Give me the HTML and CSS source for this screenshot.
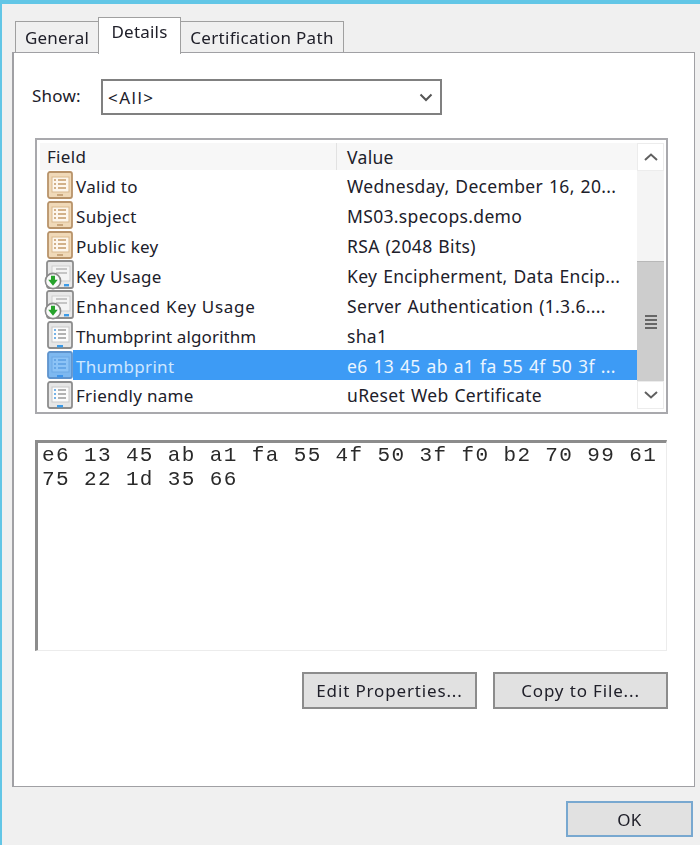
FILE: index.html
```html
<!DOCTYPE html>
<html lang="en">
<head>
<meta charset="utf-8">
<title>Certificate</title>
<link rel="stylesheet" href="styles.css">
</head>
<body>
<svg class="defs" width="0" height="0" aria-hidden="true">
  <symbol id="ico-orange" viewBox="0 0 26 28">
    <rect x="1" y="1" width="24" height="26" rx="2" fill="#f0d9b8" stroke="#b8936a" stroke-width="1.8"/>
    <rect x="5" y="6" width="17" height="15" fill="#fdf6ec" stroke="#d9b98e"/>
    <path d="M7 9h2M11 9h8M7 13h2M11 13h8M7 17h2M11 17h8" stroke="#c49a68" stroke-width="1.4"/>
    <rect x="10" y="23" width="6" height="2" fill="#c9a67c"/>
  </symbol>
  <symbol id="ico-gray" viewBox="0 0 26 28">
    <rect x="1" y="1" width="24" height="26" rx="2" fill="#e6e6e6" stroke="#8d8d8d" stroke-width="1.8"/>
    <rect x="5" y="6" width="17" height="15" fill="#fbfbfb" stroke="#c8c8c8"/>
    <path d="M7 9h2M7 13h2M7 17h2" stroke="#4a9be0" stroke-width="1.4"/>
    <path d="M11 9h8M11 13h8M11 17h8" stroke="#9a9a9a" stroke-width="1.4"/>
    <rect x="10" y="24" width="6" height="2.400" fill="#3c9be8"/>
  </symbol>
  <symbol id="ico-selected" viewBox="0 0 26 28">
    <rect x="1" y="1" width="24" height="26" rx="2" fill="#7db8f0" stroke="#5f93cc" stroke-width="1.8"/>
    <rect x="5" y="6" width="17" height="15" fill="#8cc3f6" stroke="#6ca8e4"/>
    <path d="M7 9h2M11 9h8M7 13h2M11 13h8M7 17h2M11 17h8" stroke="#5a9ee2" stroke-width="1.4"/>
    <rect x="10" y="24" width="6" height="2.400" fill="#3c93ea"/>
  </symbol>
  <symbol id="ico-usage" viewBox="0 0 30 30">
    <rect x="3" y="1" width="26" height="27" rx="2" fill="#e8e8e8" stroke="#8d8d8d" stroke-width="1.8"/>
    <rect x="8" y="6" width="18" height="15" fill="#f4f4f4" stroke="#cdcdcd"/>
    <path d="M12 9h11M12 13h11" stroke="#b5b5b5" stroke-width="1.4"/>
    <rect x="20" y="24" width="5" height="2.400" fill="#3c9be8"/>
    <circle cx="9" cy="21" r="7.600" fill="#fafafa" stroke="#8a8a8a" stroke-width="1.6"/>
    <path d="M7 15.800h4v4h2.800L9 25.800l-4.800-6H7z" fill="#27a32c"/>
  </symbol>
</svg>

<div class="window">
  <div class="content">
    <div class="tabs">
      <div class="tab tab-general">General</div>
      <div class="tab tab-active">Details</div>
      <div class="tab tab-path">Certification Path</div>
    </div>

    <div class="panel">
      <div class="show-row">
        <span class="show-label">Show:</span>
        <div class="select">
          <span class="select-value">&lt;All&gt;</span>
          <svg class="chevron" width="14" height="9" viewBox="0 0 14 9"><path d="M1.500 1.500 7 7l5.500-5.500" fill="none" stroke="#555" stroke-width="2"/></svg>
        </div>
      </div>

      <div class="list">
        <div class="list-main">
          <div class="list-head">
            <div class="col-field head-field">Field</div>
            <div class="col-value">Value</div>
          </div>
          <div class="row">
            <div class="col-field"><svg class="ico"><use href="#ico-orange"/></svg><span>Valid to</span></div>
            <div class="col-value">Wednesday, December 16, 20...</div>
          </div>
          <div class="row">
            <div class="col-field"><svg class="ico"><use href="#ico-orange"/></svg><span>Subject</span></div>
            <div class="col-value">MS03.specops.demo</div>
          </div>
          <div class="row">
            <div class="col-field"><svg class="ico"><use href="#ico-orange"/></svg><span>Public key</span></div>
            <div class="col-value">RSA (2048 Bits)</div>
          </div>
          <div class="row">
            <div class="col-field"><svg class="ico ico-wide"><use href="#ico-usage"/></svg><span>Key Usage</span></div>
            <div class="col-value">Key Encipherment, Data Encip...</div>
          </div>
          <div class="row">
            <div class="col-field"><svg class="ico ico-wide"><use href="#ico-usage"/></svg><span class="wide-label">Enhanced Key Usage</span></div>
            <div class="col-value">Server Authentication (1.3.6....</div>
          </div>
          <div class="row">
            <div class="col-field"><svg class="ico"><use href="#ico-gray"/></svg><span class="tight-label">Thumbprint algorithm</span></div>
            <div class="col-value">sha1</div>
          </div>
          <div class="row row-selected">
            <div class="col-field"><svg class="ico"><use href="#ico-selected"/></svg><span class="sel-text">Thumbprint</span></div>
            <div class="col-value">e6 13 45 ab a1 fa 55 4f 50 3f ...</div>
          </div>
          <div class="row row-last">
            <div class="col-field"><svg class="ico"><use href="#ico-gray"/></svg><span>Friendly name</span></div>
            <div class="col-value">uReset Web Certificate</div>
          </div>
        </div>
        <div class="scrollbar">
          <div class="sb-btn sb-up"><svg width="16" height="10" viewBox="0 0 16 10"><path d="M2 8 8 2.500 14 8" fill="none" stroke="#606060" stroke-width="2"/></svg></div>
          <div class="sb-track"></div>
          <div class="sb-thumb">
            <span class="grip"></span><span class="grip"></span><span class="grip"></span><span class="grip"></span>
          </div>
          <div class="sb-btn sb-down"><svg width="16" height="10" viewBox="0 0 16 10"><path d="M2 2 8 7.500 14 2" fill="none" stroke="#606060" stroke-width="2"/></svg></div>
        </div>
      </div>

      <div class="detail">
        <div>e6 13 45 ab a1 fa 55 4f 50 3f f0 b2 70 99 61</div>
        <div>75 22 1d 35 66</div>
      </div>

      <div class="actions">
        <div class="btn">Edit Properties...</div>
        <div class="btn">Copy to File...</div>
      </div>
    </div>

    <div class="footer">
      <div class="btn btn-ok">OK</div>
    </div>
  </div>
</div>
</body>
</html>
```

FILE: styles.css
```css
* { box-sizing: border-box; }
html, body { margin: 0; padding: 0; background: #f0f0f0; }
.defs { position: absolute; }

.window {
  width: 700px;
  height: 845px;
  overflow: hidden;
  background: #f0f0f0;
  border-top: 4px solid #62c6e6;
  border-left: 2px solid #62c6e6;
}
.content {
  height: 100%;
  padding-top: 13px;
  font-family: "Noto Sans", sans-serif;
  font-size: 17px;
  letter-spacing: 0.2px;
  color: #20202a;
  filter: blur(0.6px);
}

.tabs {
  display: flex;
  align-items: flex-end;
  margin: 0 0 -2px 13px;
  height: 37px;
  position: relative;
  z-index: 2;
}
.tab {
  height: 31px;
  margin-bottom: 2px;
  border: 1.5px solid #a0a0a0;
  border-bottom: 0;
  background: #f0f0f0;
  padding-top: 3px;
  text-align: center;
  line-height: 25px;
}
.tab-general { width: 83px; border-right: 0; }
.tab-path { width: 163px; border-left: 0; letter-spacing: 0.3px; }
.tab-active {
  width: 83px;
  height: 37px;
  margin-bottom: 0;
  background: #fff;
  padding-top: 1px;
}

.panel {
  width: 683px;
  height: 735px;
  margin-left: 10px;
  background: #fff;
  border: 1.5px solid #a0a0a4;
  border-left-width: 2px;
  padding: 26px 27px 0 21px;
}

.show-row { display: flex; align-items: center; height: 36px; margin-left: -3px; }
.show-label { width: 69px; padding-bottom: 4px; }
.select {
  width: 341px;
  height: 36px;
  border: 2px solid #808080;
  display: flex;
  align-items: center;
  justify-content: space-between;
  padding: 0 7px 0 5px;
  background: #fff;
}
.select-value { letter-spacing: 1.5px; }

.list {
  display: flex;
  width: 633px;
  height: 276px;
  margin-top: 23px;
  border: 2px solid #a9a9ad;
  padding: 3px 2px 3px 3px;
}
.list-main { width: 597px; flex: none; }
.list-head {
  display: flex;
  height: 27px;
  background: #f7f7f7;
  align-items: center;
}
.col-field { width: 297px; flex: none; letter-spacing: 0.3px; }
.head-field { padding-left: 7px; border-right: 1.5px solid #e2e2e2; height: 100%; display: flex; align-items: center; }
.col-value {
  padding-left: 10px;
  white-space: nowrap;
  overflow: hidden;
  flex: 1;
  font-size: 17.5px;
  letter-spacing: 0.33px;
  word-spacing: 1px;
}
.row {
  display: flex;
  height: 30px;
  align-items: center;
}
.row .col-field { display: flex; align-items: center; padding-left: 7px; height: 100%; }
.row span, .row .col-value { position: relative; top: 1px; }
.row-last span, .row-last .col-value { top: 0; }
.wide-label { letter-spacing: 0.75px; }
.tight-label { letter-spacing: 0.1px; }
.ico { width: 26px; height: 28px; flex: none; margin-right: 3px; }
.ico-wide { width: 30px; height: 30px; margin-left: -3px; margin-right: 2px; }

.row-selected { background: linear-gradient(to right, #fff 33px, #3d9bf5 33px); color: #e4f2ff; }
.row-selected .col-value { color: #eaf5ff; }
.sel-text { color: #cfe7ff; }

.scrollbar {
  width: 27px;
  flex: none;
  display: flex;
  flex-direction: column;
  background: #f0f0f0;
}
.sb-btn {
  background: #fff;
  display: flex;
  align-items: center;
  justify-content: center;
  border: 1px solid #ececec;
}
.sb-up { height: 28px; }
.sb-track { height: 90px; background: #f4f4f4; }
.sb-thumb {
  height: 120px;
  background: #cdcdcd;
  border-top: 1px solid #b8b8b8;
  display: flex;
  flex-direction: column;
  align-items: center;
  justify-content: center;
  gap: 2px;
}
.grip { width: 12px; height: 2px; background: #666; }
.sb-down { flex: 1; }

.detail {
  width: 632px;
  height: 211px;
  margin-top: 26px;
  border: 1px solid #ececec;
  border-top: 3px solid #8c8c8c;
  border-left: 3px solid #8c8c8c;
  padding: 1px 0 0 4px;
  font-family: "Liberation Mono", monospace;
  font-size: 21px;
  letter-spacing: 1.38px;
  line-height: 24px;
  color: #2a2a2a;
  white-space: nowrap;
}

.actions {
  display: flex;
  justify-content: flex-end;
  gap: 16px;
  width: 633px;
  margin-top: 21px;
}
.btn {
  width: 175px;
  height: 37px;
  background: #e1e1e1;
  border: 2px solid #8c8c8c;
  display: flex;
  align-items: center;
  justify-content: center;
  letter-spacing: 0.85px;
}

.footer {
  display: flex;
  justify-content: flex-end;
  padding: 14px 7px 0 0;
}
.btn-ok {
  width: 127px;
  height: 36px;
  border-color: #78a8d0;
  letter-spacing: 0.4px;
}
```
